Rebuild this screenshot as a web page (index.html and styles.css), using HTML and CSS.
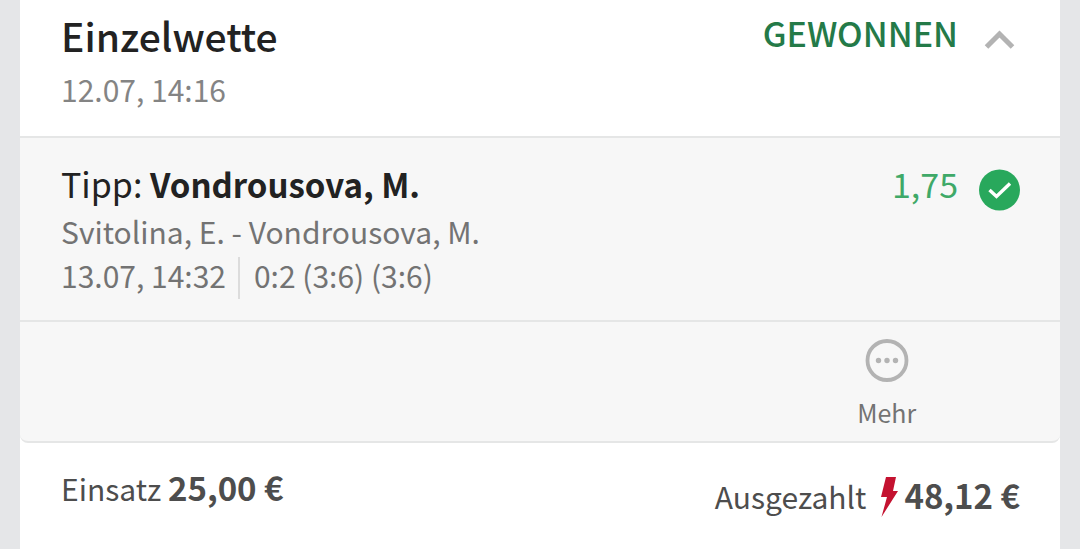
FILE: index.html
```html
<!DOCTYPE html>
<html lang="de">
<head>
<meta charset="utf-8">
<meta name="viewport" content="width=device-width, initial-scale=1">
<title>Einzelwette</title>
<link rel="stylesheet" href="styles.css">
</head>
<body>
<main class="slip">
  <header class="slip-header">
    <div>
      <h1 class="title">Einzelwette</h1>
      <p class="date">12.07, 14:16</p>
    </div>
    <div class="status">
      <span class="status-text">GEWONNEN</span>
      <button class="toggle" type="button" aria-label="Einklappen" aria-expanded="true">
        <svg class="icon" viewBox="0 0 42 42" aria-hidden="true"><path d="M8.500 28 21.500 15 34.500 28" fill="none" stroke="#b3b3b3" stroke-width="5"/></svg>
      </button>
    </div>
  </header>
  <div class="details">
    <section class="bet">
      <div>
        <h2 class="tip">Tipp: <strong>Vondrousova, M.</strong></h2>
        <p class="info">Svitolina, E. - Vondrousova, M.</p>
        <p class="info result"><span>13.07, 14:32</span><span class="separator"></span><span>0:2 (3:6) (3:6)</span></p>
      </div>
      <div class="odds">
        <span class="odds-value">1,75</span>
        <svg class="icon" viewBox="0 0 42 42" role="img" aria-label="Gewonnen"><circle cx="21.500" cy="21" r="20.500" fill="#28a85c"/><path d="M11.500 21 18.500 27.500 32 14.500" fill="none" stroke="#fff" stroke-width="3.400"/></svg>
      </div>
    </section>
    <div class="actions">
      <button class="more" type="button">
        <svg class="more-icon" viewBox="0 0 44 44" aria-hidden="true"><circle cx="22" cy="22.500" r="19.500" fill="none" stroke="#b3b3b3" stroke-width="3.800"/><g fill="#b3b3b3"><circle cx="13.500" cy="22.500" r="2.700"/><circle cx="22" cy="22.500" r="2.700"/><circle cx="30.500" cy="22.500" r="2.700"/></g></svg>
        <span>Mehr</span>
      </button>
    </div>
  </div>
  <footer class="slip-footer">
    <p class="stake">Einsatz <strong class="amount">25,00 €</strong></p>
    <p class="payout"><span>Ausgezahlt</span>
      <svg class="bolt" viewBox="0 0 20 42" aria-hidden="true"><path d="M6 1H16L13 15H18L1.500 41 7 21H1Z" fill="#c41230"/></svg>
      <strong class="amount">48,12 €</strong></p>
  </footer>
</main>
</body>
</html>
```
FILE: styles.css
```css
* {
  box-sizing: border-box;
}

body {
  margin: 0;
  background: #e5e6e8;
  color: #222;
  font-family: "Noto Sans CJK SC", "Noto Sans", sans-serif;
}

h1,
h2,
p {
  margin: 0;
}

button {
  padding: 0;
  border: 0;
  background: none;
  font-family: inherit;
  cursor: pointer;
}

.slip {
  min-height: 100vh;
  margin: 0 20px;
  background: #fff;
}

.slip-header,
.bet,
.slip-footer {
  display: flex;
  justify-content: space-between;
  align-items: flex-start;
}

.slip-header {
  padding: 11px 40px 25px 41px;
  border-bottom: 2px solid #e5e6e6;
}

.title {
  font-size: 39px;
  font-weight: 500;
  line-height: 48px;
}

.date {
  margin-top: 8px;
  color: #848484;
  font-size: 30px;
  line-height: 44px;
}

.status,
.odds {
  display: flex;
  align-items: flex-start;
  gap: 20px;
}

.status-text {
  color: #247a48;
  font-size: 34px;
  font-weight: 500;
  line-height: 44px;
}

.icon {
  display: block;
  width: 42px;
  height: 42px;
}

.toggle {
  margin-top: 8px;
}

.details {
  overflow: hidden;
  border-bottom: 2px solid #e5e6e6;
  border-radius: 0 0 8px 8px;
  background: #f7f7f7;
}

.bet {
  padding: 22px 40px 21px 41px;
  border-bottom: 2px solid #e5e6e6;
}

.tip {
  font-size: 34px;
  font-weight: 400;
  line-height: 48px;
}

.tip strong {
  font-size: 33px;
  font-weight: 700;
}

.info {
  color: #737373;
  font-size: 30px;
  line-height: 44px;
}

.tip + .info {
  margin-top: 1px;
}

.result {
  display: flex;
}

.separator {
  width: 2px;
  height: 42px;
  margin: 4px 14px 0 12px;
  background: #dcdcdc;
}

.odds {
  color: #3fa968;
}

.odds .icon {
  margin-top: 9px;
}

.odds-value {
  font-size: 34px;
  line-height: 48px;
}

.actions {
  display: grid;
  grid-template-columns: repeat(3, 1fr);
  padding: 16px 0 13px;
}

.more {
  display: flex;
  grid-column: 3;
  flex-direction: column;
  align-items: center;
  gap: 14px;
  color: #737373;
  font-size: 25px;
  line-height: 32px;
}

.more-icon {
  width: 44px;
  height: 44px;
}

.slip-footer {
  padding: 20px 40px 20px 41px;
  color: #4d4d4d;
  font-size: 30px;
}

.stake {
  line-height: 48px;
}

.payout {
  display: flex;
  align-items: baseline;
  line-height: 64px;
}

.bolt {
  align-self: center;
  width: 20px;
  height: 42px;
  margin: 2px 4px 0 14px;
}

.amount {
  font-size: 33px;
  font-weight: 700;
}
```
